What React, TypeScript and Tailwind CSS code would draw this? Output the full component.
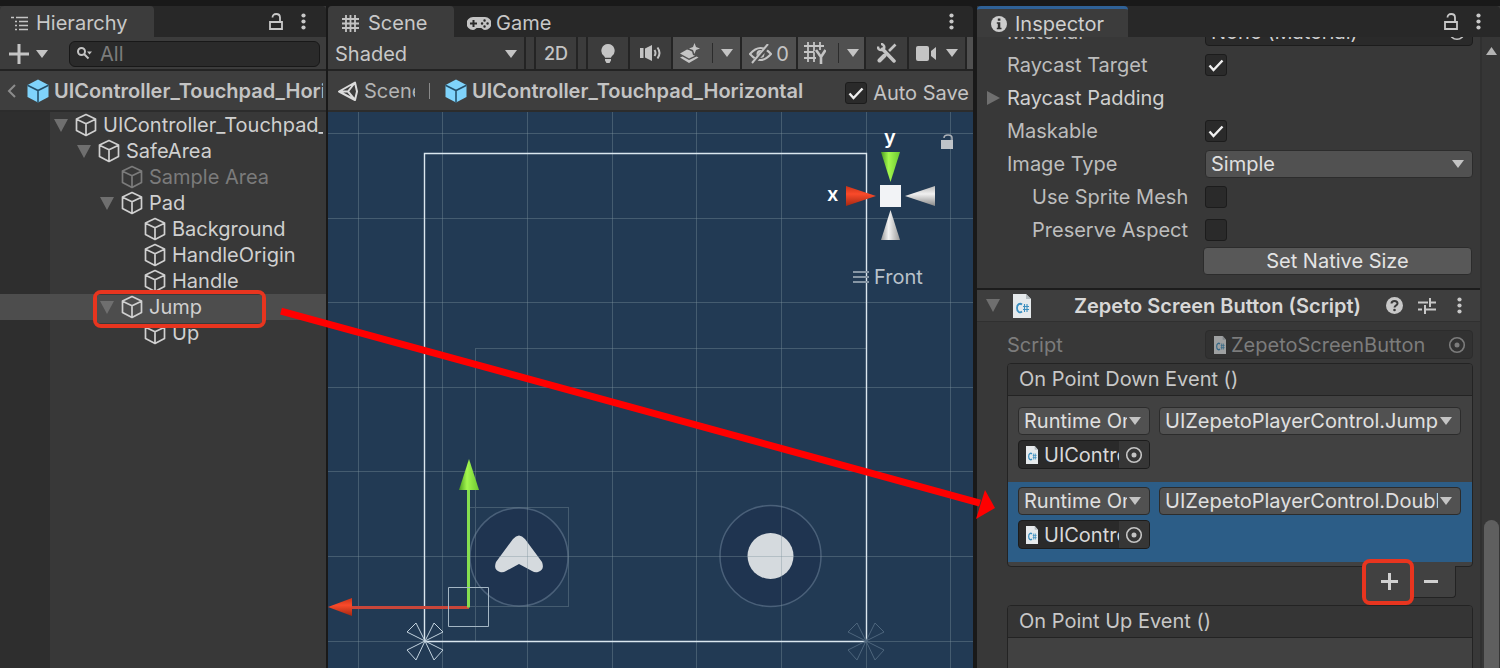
import { useState } from "react";
import type { ReactNode } from "react";

type TreeNode = {
  name: string;
  depth: number;
  open?: boolean;
  disabled?: boolean;
  selected?: boolean;
};

const nodes: TreeNode[] = [
  { name: "UIController_Touchpad_Horizontal", depth: 0, open: true },
  { name: "SafeArea", depth: 1, open: true },
  { name: "Sample Area", depth: 2, disabled: true },
  { name: "Pad", depth: 2, open: true },
  { name: "Background", depth: 3 },
  { name: "HandleOrigin", depth: 3 },
  { name: "Handle", depth: 3 },
  { name: "Jump", depth: 2, open: true, selected: true },
  { name: "Up", depth: 3 },
];

const indents = ["pl-[54px]", "pl-[77px]", "pl-[100px]", "pl-[123px]"];

function Down({ className = "text-[#c4c4c4]" }: { className?: string }) {
  return (
    <svg width="12" height="8" viewBox="0 0 12 8" className={`shrink-0 ${className}`}>
      <path d="M0 0h12L6 8z" fill="currentColor" />
    </svg>
  );
}

function Foldout() {
  return (
    <svg width="14" height="13" viewBox="0 0 14 13" className="shrink-0 text-[#6f6f6f]">
      <path d="M0 0h14L7 13z" fill="currentColor" />
    </svg>
  );
}

function Cube({ prefab = false }: { prefab?: boolean }) {
  return prefab ? (
    <svg width="22" height="24" viewBox="0 0 22 24" className="shrink-0">
      <path d="M11 .5 21.5 6v12L11 23.5.5 18V6z" fill="#7fd3fb" />
      <path d="M.5 6.200 11 11.500 21.500 6.200M11 11.500V23.500" stroke="#25506a" strokeWidth="1.600" fill="none" />
    </svg>
  ) : (
    <svg width="22" height="24" viewBox="0 0 22 24" fill="none" stroke="currentColor" strokeWidth="1.700" strokeLinejoin="round" className="shrink-0">
      <path d="M11 1.500 20.500 6v11.500L11 22.500 1.500 17.500V6zM1.500 6.200 11 10.800l9.500-4.600M11 10.800v11.700" />
    </svg>
  );
}

function Kebab() {
  return (
    <svg width="5" height="17" viewBox="0 0 5 17" fill="#c8c8c8">
      <circle cx="2.500" cy="2.500" r="2.100" />
      <circle cx="2.500" cy="8.500" r="2.100" />
      <circle cx="2.500" cy="14.500" r="2.100" />
    </svg>
  );
}

function Unlock() {
  return (
    <svg width="14" height="17" viewBox="0 0 14 17" fill="none" stroke="#c8c8c8" strokeWidth="1.800">
      <path d="M1 9h12v7H1zM3.500 4.500C3.500 2 5 1 7.200 1 9.800 1 11 2.300 11 4.500V9" />
    </svg>
  );
}

function Target({ className = "text-[#c4c4c4]" }: { className?: string }) {
  return (
    <svg width="18" height="18" viewBox="0 0 18 18" className={`shrink-0 ${className}`}>
      <circle cx="9" cy="9" r="7.300" fill="none" stroke="currentColor" strokeWidth="1.600" />
      <circle cx="9" cy="9" r="2.500" fill="currentColor" />
    </svg>
  );
}

function ScriptIcon({ large = false }: { large?: boolean }) {
  return (
    <svg width={large ? 18 : 12} height={large ? 24 : 18} viewBox="0 0 18 24" preserveAspectRatio="none" className="shrink-0">
      <path d="M0 0h13l5 5v19H0z" fill="#e6eaec" />
      <path d="M13 0v5h5z" fill="#b4bcc0" />
      <path d="M9 10.500C7 8.800 4 10 4 14s3 5.300 5 3.500" stroke="#3b8fc0" strokeWidth="1.800" fill="none" />
      <path d="M11.500 10v8M14 10v8M10 12.500h6M10 15.500h6" stroke="#3b8fc0" strokeWidth="1.100" fill="none" />
    </svg>
  );
}

function Tab({ children, className }: { children: ReactNode; className: string }) {
  return (
    <button type="button" className={`flex h-full items-center whitespace-nowrap ${className}`}>
      {children}
    </button>
  );
}

function Hierarchy() {
  return (
    <section className="flex w-[326px] shrink-0 flex-col overflow-hidden bg-[#383838]">
      <div className="flex h-[31px] items-center rounded-t bg-[#282828]">
        <Tab className="w-[154px] gap-2 rounded-t bg-[#3c3c3c] pl-[11px] pt-[3px]">
          <svg width="17" height="15" viewBox="0 0 17 15" stroke="#c4c4c4" strokeWidth="1.600" fill="none">
            <path d="M0 1.500h3M5 1.500h12M4 5.500h2M8 5.500h9M4 9.500h2M8 9.500h9M4 13.500h2M8 13.500h9" />
          </svg>
          Hierarchy
        </Tab>
        <div className="flex flex-1 items-center justify-end gap-[18px] pr-[20px]">
          <button type="button" aria-label="Lock"><Unlock /></button>
          <button type="button" aria-label="Hierarchy menu"><Kebab /></button>
        </div>
      </div>

      <div className="flex h-[34px] items-center border-b-2 border-[#232323] bg-[#3c3c3c] pl-[9px] pr-[6px] pt-px">
        <button type="button" aria-label="Create" className="flex w-[60px] shrink-0 items-center gap-[7px]">
          <svg width="20" height="20" viewBox="0 0 20 20" stroke="#c4c4c4" strokeWidth="3">
            <path d="M10 0v20M0 10h20" />
          </svg>
          <Down />
        </button>
        <label className="flex h-[26px] min-w-0 flex-1 items-center gap-2 rounded-md border border-[#181818] bg-[#2a2a2a] pl-[7px]">
          <svg width="15" height="14" viewBox="0 0 15 14" fill="none" stroke="#c4c4c4" strokeWidth="2" className="shrink-0">
            <circle cx="4.500" cy="4.500" r="3.500" />
            <path d="m7 7 4.500 4.500" />
            <path d="M10 4.500h5l-2.500 3z" fill="#c4c4c4" stroke="none" />
          </svg>
          <input aria-label="Search hierarchy" placeholder="All" className="min-w-0 flex-1 bg-transparent outline-none placeholder:text-[#7c7c7c]" />
        </label>
      </div>

      <div className="flex h-[41px] items-center overflow-hidden border-b-2 border-[#2c2c2c] bg-[#3e3e3e] pl-[7px] pr-[3px] pt-px">
        <button type="button" aria-label="Back" className="mr-[11px]">
          <svg width="9" height="14" viewBox="0 0 9 14" fill="none" stroke="#8c8c8c" strokeWidth="2">
            <path d="M8 1 2 7l6 6" />
          </svg>
        </button>
        <Cube prefab />
        <span className="ml-[5px] overflow-hidden whitespace-nowrap font-semibold text-[#c4c4c4]">UIController_Touchpad_Horizontal</span>
      </div>

      <div className="flex-1 bg-linear-to-r from-[#2e2e2e] from-[50px] to-[#383838] to-[50px]">
        <ul>
          {nodes.map((node) => (
            <li
              key={node.name}
              className={`relative flex h-[26px] items-center pr-[3px] ${indents[node.depth]} ${node.selected ? "z-10 bg-[#4d4d4d]" : ""} ${node.disabled ? "text-[#7b7b7b]" : "text-[#d0d0d0]"}`}
            >
              {node.selected && (
                <div className="absolute -top-[4px] left-[93px] flex h-[38px] w-[173px] flex-col overflow-hidden rounded-lg border-4 border-[#e8351f] bg-[#3a3a3a] py-px">
                  <div className="flex-1 bg-[#4d4d4d]" />
                </div>
              )}
              <div className="relative flex min-w-0 flex-1 items-center">
                <span className="flex w-[21px] shrink-0">{node.open && <Foldout />}</span>
                <Cube />
                <span className="ml-[6px] overflow-hidden whitespace-nowrap">{node.name}</span>
              </div>
            </li>
          ))}
        </ul>
      </div>
    </section>
  );
}

function Tool({ label, className, children }: { label: string; className: string; children: ReactNode }) {
  return (
    <button type="button" aria-label={label} className={`flex h-full shrink-0 items-center justify-center border-r-2 border-[#242424] text-[#c4c4c4] ${className}`}>
      {children}
    </button>
  );
}

function SceneToolbar() {
  return (
    <div className="flex h-[34px] items-center overflow-hidden border-b-2 border-[#232323] bg-[#3c3c3c]">
      <button type="button" className="flex h-full w-[198px] shrink-0 items-center justify-between border-r-2 border-[#242424] pl-[7px] pr-[7px] pt-[2px]">
        Shaded
        <Down />
      </button>
      <div className="h-full w-[10px] shrink-0 border-r-2 border-[#242424]" />
      <Tool label="2D" className="w-[42px] pt-[2px] text-lg font-medium">2D</Tool>
      <div className="h-full w-[10px] shrink-0 border-r-2 border-[#242424]" />
      <Tool label="Lighting" className="w-[42px]">
        <svg width="14" height="19" viewBox="0 0 14 19" fill="currentColor">
          <path d="M7 0a6.700 6.700 0 0 1 4 12c-.6.600-1 1.200-1 1.800H4c0-.6-.4-1.200-1-1.800A6.700 6.700 0 0 1 7 0zM4 15h6v1.500L8.500 19h-3L4 16.500z" />
        </svg>
      </Tool>
      <Tool label="Audio" className="w-[43px]">
        <svg width="22" height="16" viewBox="0 0 22 16" fill="currentColor">
          <path d="M0 3h3.500v10H0zM5 3.500 12 0v16l-7-3.500z" />
          <path d="M14.500 5q2 3 0 6M17.500 2.500q4 5.500 0 11" fill="none" stroke="currentColor" strokeWidth="2" />
        </svg>
      </Tool>
      <Tool label="Effects" className="w-[69px] bg-[#505050]">
        <svg width="20" height="20" viewBox="0 0 20 20" fill="currentColor">
          <path d="m14.500 0 1.500 4 4 1.500-4 1.500-1.500 4L13 7 9 5.500 13 4z" />
          <path d="M0 10.500 7 6.500l2.500.8 2.500 1.200 1 3.500 2 .8-6 2.700z" />
          <path d="m0 14.500 2.500-1L9 17l7.500-3.500 2 1L9 20z" />
        </svg>
        <span className="ml-[12px] mr-[8px] h-[20px] w-px bg-[#2c2c2c]" />
        <Down />
      </Tool>
      <Tool label="Hidden objects" className="w-[56px] gap-1 bg-[#505050] pt-px">
        <svg width="23" height="20" viewBox="0 0 23 20" fill="none" stroke="currentColor" strokeWidth="2">
          <path d="M1 10Q11.500-2 22 10 11.500 22 1 10z" />
          <circle cx="11.500" cy="10" r="4" fill="currentColor" stroke="none" />
          <path d="M20 1 4 19" stroke="#505050" strokeWidth="4" />
          <path d="M19 0 3 19" />
        </svg>
        0
      </Tool>
      <Tool label="Grid" className="w-[68px] bg-[#505050]">
        <svg width="22" height="22" viewBox="0 0 22 22" fill="none" stroke="currentColor" strokeWidth="1.800">
          <path d="M0 4h20M0 10h11M0 16h12M4 0v20M10 0v20M16 0v8" />
          <path d="m12 8 5 7 4.500-7M17 14.500V22" stroke="#505050" strokeWidth="5" />
          <path d="m12 8 5 7 4.500-7M17 14.500V22" strokeWidth="2.600" />
        </svg>
        <span className="ml-[12px] mr-[8px] h-[20px] w-px bg-[#2c2c2c]" />
        <Down />
      </Tool>
      <Tool label="Tools" className="w-[43px]">
        <svg width="20" height="20" viewBox="0 0 20 20" fill="none" stroke="currentColor">
          <path d="M5.500 6 17 18" strokeWidth="3.500" strokeLinecap="round" />
          <path d="M1 3.500Q1 7.500 5 7 8 6 7 3 6 1 4 1" strokeWidth="2.500" />
          <path d="M18.500 1.500 12 8" strokeWidth="2.600" />
          <path d="m7.500 12.500-5 5" strokeWidth="4" strokeLinecap="round" />
        </svg>
      </Tool>
      <Tool label="Camera" className="w-[58px] gap-[9px]">
        <svg width="21" height="15" viewBox="0 0 21 15" fill="currentColor">
          <rect width="13" height="15" rx="2" />
          <path d="m15 5 5-4v13l-5-4z" />
        </svg>
        <Down />
      </Tool>
      <Tool label="Gizmos" className="w-[42px] bg-[#505050]">
        <svg width="28" height="20" viewBox="0 0 28 20" fill="none" stroke="currentColor" strokeWidth="2">
          <circle cx="10" cy="10" r="8" />
        </svg>
      </Tool>
    </div>
  );
}

const gridX = [30, 114, 199, 284, 368, 453, 538, 622];
const gridY = [21, 106, 190, 275, 359, 444, 529];

function SceneCanvas() {
  return (
    <div className="relative min-h-[555px] flex-1 overflow-hidden bg-[#223a54] text-white">
      <svg width="100%" height="100%" className="absolute inset-0" fill="none">
        <defs>
          <linearGradient id="coneGreen"><stop stopColor="#4a9c20" /><stop offset=".4" stopColor="#a4f84e" /><stop offset="1" stopColor="#6cc832" /></linearGradient>
          <linearGradient id="coneRed" x2="0" y2="1"><stop stopColor="#c93318" /><stop offset=".4" stopColor="#fa4a2a" /><stop offset="1" stopColor="#a42812" /></linearGradient>
          <linearGradient id="coneV"><stop stopColor="#999" /><stop offset=".4" stopColor="#f4f4f4" /><stop offset="1" stopColor="#999" /></linearGradient>
          <linearGradient id="coneH" x2="0" y2="1"><stop stopColor="#bbb" /><stop offset=".4" stopColor="#f0f0f0" /><stop offset="1" stopColor="#888" /></linearGradient>
        </defs>

        <circle cx="191" cy="445" r="49" fill="#1f3450" stroke="#4a6079" strokeWidth="1.500" />
        <circle cx="442.500" cy="444" r="50.500" fill="#1f3450" stroke="#4a6079" strokeWidth="1.500" />
        <circle cx="442.500" cy="444" r="23" fill="#d5dade" />
        <path d="M185 427q6-7 12 0l17 23q3 8-4 10-3 1-6-1l-13-7-13 7q-3 2-6 1-7-2-4-10z" fill="#d5dade" />

        <g stroke="#7f929f" strokeOpacity=".38" shapeRendering="crispEdges">
          {gridX.map((x) => <line key={x} x1={x + 0.5} x2={x + 0.5} y1="0" y2="100%" />)}
          {gridY.map((y) => <line key={y} x1="0" x2="100%" y1={y + 0.5} y2={y + 0.5} />)}
          <path d="M147.500 529V236.500h390M141 395.500h99.500v99H141" />
        </g>

        <path d="M96.500 41.500h442v488h-442z" stroke="#dbe7ef" strokeWidth="1.400" />
        <path d="M97 529 88 511 79 520zM97 529l9-18 9 9zM97 529l-18 9 9 10zM97 529l18 9-9 10z" stroke="#c3d3df" />
        <path d="M538 529l-9-18-9 9zM538 529l9-18 9 9zM538 529l-18 9 9 10zM538 529l18 9-9 10z" stroke="#4d657c" />

        <path d="M23 495.500h118" stroke="#c9463a" strokeWidth="3" />
        <path d="M140.500 495.500V376" stroke="#86de50" strokeWidth="3" />
        <path d="M131 378h20l-10-31z" fill="url(#coneGreen)" />
        <path d="M24 486v18L0 495z" fill="url(#coneRed)" />
        <path d="M120.500 475.500h40v39h-40z" stroke="#a4b6c4" />

        <path d="M553 40h19l-9.500 30z" fill="url(#coneGreen)" />
        <path d="M518 74v20l30-10z" fill="url(#coneRed)" />
        <path d="M607 74v20l-30-10z" fill="url(#coneH)" />
        <path d="M553 128h19l-9.500-30z" fill="url(#coneV)" />
        <path d="M552 73h21v22h-21z" fill="#f2f3f6" />

        <path d="M613 28h12v9h-12z" fill="#bfc3c8" />
        <path d="M616 26q0-3 4-3t4 3v2" stroke="#aeb3b9" strokeWidth="1.500" />
        <path d="M525 160h16M525 165h16M525 170h16" stroke="#8796a5" strokeWidth="2" />
      </svg>
      <span className="absolute left-[556px] top-[13px] text-xl font-semibold leading-6">y</span>
      <span className="absolute left-[499px] top-[70px] text-xl font-semibold leading-6">x</span>
      <button type="button" className="absolute left-[546px] top-[153px] leading-6 text-[#b9c2cb]">Front</button>
    </div>
  );
}

function SceneView() {
  return (
    <section className="mr-[2px] flex min-w-0 flex-1 flex-col overflow-hidden">
      <div className="flex h-[31px] items-center rounded-t bg-[#282828]">
        <Tab className="w-[126px] gap-[9px] rounded-t bg-[#3c3c3c] pl-[14px] pt-[3px]">
          <svg width="17" height="17" viewBox="0 0 17 17" stroke="#c4c4c4" strokeWidth="1.800">
            <path d="M4 0v17M8.500 0v17M13 0v17M0 4h17M0 8.500h17M0 13h17" />
          </svg>
          Scene
        </Tab>
        <Tab className="gap-[5px] pl-[13px] pt-[3px]">
          <svg width="24" height="13" viewBox="0 0 24 13">
            <path d="M6 0h12a6 6 0 0 1 0 13c-2 0-3-2-4-2h-4c-1 0-2 2-4 2A6 6 0 0 1 6 0z" fill="#c4c4c4" />
            <path d="M6.500 3v7M3 6.500h7" stroke="#282828" strokeWidth="2" />
            <path d="M17.500 3.500h.1M17.500 9.500h.1M15 6.500h.1M20.500 6.500h.1" stroke="#282828" strokeWidth="2.400" strokeLinecap="round" />
          </svg>
          Game
        </Tab>
        <button type="button" aria-label="Scene menu" className="ml-auto mr-[19px]"><Kebab /></button>
      </div>

      <SceneToolbar />

      <div className="flex h-[41px] items-center border-b-2 border-[#2c2c2c] bg-[#3e3e3e] pl-[10px] pr-1 text-[#b4b4b4]">
        <svg width="20" height="20" viewBox="0 0 20 20" fill="none" stroke="#dcdcdc" strokeWidth="2" strokeLinejoin="round" className="shrink-0">
          <path d="M1 10.500 17 1.500l2 9-2 8.500zM1 10.500h9M10 10.500l7-9M10 10.500l7 8.500" />
        </svg>
        <button type="button" className="ml-[6px] w-[51px] shrink-0 overflow-hidden whitespace-nowrap text-left">Scenes</button>
        <span className="ml-[14px] mr-[15px] h-4 w-px shrink-0 bg-[#8a8a8a]" />
        <Cube prefab />
        <span className="ml-[5px] min-w-0 overflow-hidden whitespace-nowrap font-semibold text-[#c4c4c4]">UIController_Touchpad_Horizontal</span>
        <div className="ml-auto flex shrink-0 items-center gap-[6px] pt-[5px] text-[#c4c4c4]">
          <Check id="autosave" defaultChecked />
          <label htmlFor="autosave">Auto Save</label>
        </div>
      </div>

      <SceneCanvas />
    </section>
  );
}

function Check({ id, defaultChecked = false }: { id: string; defaultChecked?: boolean }) {
  return (
    <span className="grid size-[22px] shrink-0">
      <input id={id} type="checkbox" defaultChecked={defaultChecked} className="peer col-start-1 row-start-1 size-[22px] appearance-none rounded-[3px] border border-[#1c1c1c] bg-[#2a2a2a]" />
      <svg width="22" height="22" viewBox="0 0 22 22" fill="none" stroke="#efefef" strokeWidth="2.400" className="pointer-events-none invisible col-start-1 row-start-1 peer-checked:visible">
        <path d="m4.500 11.500 4 4.500L17.500 6.500" />
      </svg>
    </span>
  );
}

function Field({ label, htmlFor, nested, foldout, children }: { label: string; htmlFor?: string; nested?: boolean; foldout?: boolean; children?: ReactNode }) {
  return (
    <div className="flex h-[33px] items-center pl-[10px] pr-[7px]">
      <span className="w-[20px] shrink-0">
        {foldout && (
          <svg width="13" height="14" viewBox="0 0 13 14" fill="#6f6f6f"><path d="M0 0v14l13-7z" /></svg>
        )}
      </span>
      <label htmlFor={htmlFor} className={`w-[198px] shrink-0 whitespace-nowrap ${nested ? "pl-[25px]" : ""} ${foldout ? "text-[#d0d0d0]" : ""}`}>{label}</label>
      {children}
    </div>
  );
}

function Dropdown({ id, label, value, className }: { id: string; label: string; value: string; className: string }) {
  return (
    <span className={`grid items-center ${className}`}>
      <select id={id} aria-label={label} className="col-start-1 row-start-1 h-[28px] w-full min-w-0 appearance-none overflow-hidden rounded border border-[#2c2c2c] bg-[#515151] pl-[5px] pr-[22px] leading-6 text-[#e0e0e0]">
        <option>{value}</option>
      </select>
      <span className="pointer-events-none col-start-1 row-start-1 mr-[9px] justify-self-end"><Down /></span>
    </span>
  );
}

function Listener({ index, method, selected }: { index: number; method: string; selected?: boolean }) {
  return (
    <div className={`grid h-[80px] grid-cols-[132px_1fr] content-start gap-x-[9px] gap-y-[5px] pl-[10px] pr-[11px] pt-[5px] ${selected ? "bg-[#2c5d87]" : ""}`}>
      <Dropdown id={`mode-${index}`} label="Call state" value="Runtime Only" className="min-w-0" />
      <Dropdown id={`method-${index}`} label="Function" value={method} className="min-w-0" />
      <button type="button" className="flex h-[29px] items-center overflow-hidden rounded border border-[#1c1c1c] bg-[#2a2a2a] pl-[7px] text-[#d8d8d8]">
        <ScriptIcon />
        <span className="ml-[6px] w-[75px] shrink-0 overflow-hidden whitespace-nowrap text-left">UIController</span>
        <span className="grid h-full flex-1 place-items-center bg-[#363636]"><Target /></span>
      </button>
    </div>
  );
}

function Inspector() {
  const [listeners] = useState(["UIZepetoPlayerControl.Jump", "UIZepetoPlayerControl.DoubleJump"]);

  return (
    <section className="flex w-[523px] shrink-0 flex-col overflow-hidden bg-[#383838] text-[#bdbdbd]">
      <div className="flex h-[31px] shrink-0 items-center rounded-t bg-[#282828]">
        <Tab className="w-[151px] gap-2 rounded-t border-t-[3px] border-[#2f6196] bg-[#3c3c3c] pl-[14px] pt-px text-[#d0d0d0]">
          <svg width="16" height="16" viewBox="0 0 16 16">
            <circle cx="8" cy="8" r="8" fill="#cdcdcd" />
            <path d="M6.800 2.500h2.600v2.200H6.800zM5.800 6.200h3.500v5.500h1.200v1.500H5.800v-1.500h1V7.700h-1z" fill="#303030" />
          </svg>
          Inspector
        </Tab>
        <div className="ml-auto flex items-center gap-[18px] pr-[19px]">
          <button type="button" aria-label="Lock"><Unlock /></button>
          <button type="button" aria-label="Inspector menu"><Kebab /></button>
        </div>
      </div>

      <div className="flex min-h-0 flex-1">
        <div className="h-[631px] min-w-0 flex-1 overflow-hidden">
          {/* list is scrolled a little past the Material row */}
          <div className="-mt-[22px]">
            <Field label="Material">
              <button type="button" className="flex h-[28px] flex-1 items-center justify-between rounded border border-[#1c1c1c] bg-[#2a2a2a] pl-[5px] pr-[6px] text-[#d0d0d0]">
                None (Material)
                <Target />
              </button>
            </Field>
            <Field label="Raycast Target" htmlFor="raycast"><Check id="raycast" defaultChecked /></Field>
            <Field label="Raycast Padding" foldout />
            <Field label="Maskable" htmlFor="maskable"><Check id="maskable" defaultChecked /></Field>
            <Field label="Image Type" htmlFor="image-type">
              <Dropdown id="image-type" label="Image Type" value="Simple" className="flex-1" />
            </Field>
            <Field label="Use Sprite Mesh" htmlFor="sprite-mesh" nested><Check id="sprite-mesh" /></Field>
            <Field label="Preserve Aspect" htmlFor="aspect" nested><Check id="aspect" /></Field>
          </div>
          <div className="mt-px flex justify-end pr-2">
            <button type="button" className="h-[28px] w-[269px] rounded border border-[#2c2c2c] bg-[#585858] text-[#e4e4e4]">Set Native Size</button>
          </div>

          <div className="mt-[13px] flex h-[34px] items-center border-b border-t-2 border-b-[#303030] border-t-[#1c1c1c] bg-[#3e3e3e] pl-[9px] pr-[18px]">
            <Foldout />
            <span className="ml-[13px]"><ScriptIcon large /></span>
            <h2 className="ml-[43px] flex-1 whitespace-nowrap font-semibold text-[#d8d8d8]">Zepeto Screen Button (Script)</h2>
            <button type="button" aria-label="Help">
              <svg width="17" height="17" viewBox="0 0 17 17">
                <circle cx="8.500" cy="8.500" r="8.500" fill="#c8c8c8" />
                <path d="M5.500 6.500Q5.500 4 8.500 4t3 2.500c0 2-3 1.700-3 4" fill="none" stroke="#3a3a3a" strokeWidth="2" />
                <circle cx="8.500" cy="13" r="1.300" fill="#3a3a3a" />
              </svg>
            </button>
            <button type="button" aria-label="Presets" className="ml-[15px] mr-[21px]">
              <svg width="18" height="16" viewBox="0 0 18 16" stroke="#c8c8c8" strokeWidth="2" fill="none">
                <path d="M0 4.500h10M13 4.500h5M12 0v9M0 11.500h4M7 11.500h11M7 7v9" />
              </svg>
            </button>
            <button type="button" aria-label="Component menu"><Kebab /></button>
          </div>

          <div className="mt-[6px] text-[#7c7c7c]">
            <Field label="Script">
              <button type="button" disabled className="flex h-[29px] flex-1 items-center rounded border border-[#2c2c2c] bg-[#323232] pl-[8px] pr-[6px]">
                <span className="flex opacity-60"><ScriptIcon /></span>
                <span className="ml-[5px] flex-1 text-left">ZepetoScreenButton</span>
                <Target className="text-[#7c7c7c]" />
              </button>
            </Field>
          </div>

          <div className="ml-[30px] mr-[7px] mt-[2px]">
            <div className="overflow-hidden rounded border border-[#232323] bg-[#414141]">
              <h3 className="h-[32px] border-b border-[#232323] bg-[#353535] pl-[11px] leading-[31px] text-[#c8c8c8]">On Point Down Event ()</h3>
              <div className="pb-[4px] pt-[6px]">
                {listeners.map((method, i) => (
                  <Listener key={method} index={i} method={method} selected={i === 1} />
                ))}
              </div>
            </div>
            <div className="mr-[17px] flex justify-end">
              <div className="-mt-px flex h-[32px] w-[89px] items-center rounded-b border border-t-0 border-[#232323] bg-[#414141]">
                <button type="button" aria-label="Add listener" className="relative z-10 -ml-[6px] grid h-[46px] w-[52px] shrink-0 place-items-center rounded-lg border-4 border-[#e8351f] bg-[#414141] pl-[3px]">
                  <svg width="17" height="17" viewBox="0 0 17 17" stroke="#d0d0d0" strokeWidth="3">
                    <path d="M8.500 0v17M0 8.500h17" />
                  </svg>
                </button>
                <button type="button" aria-label="Remove listener" className="ml-[10px] grid h-full w-[14px] place-items-center">
                  <svg width="14" height="3" viewBox="0 0 14 3"><path d="M0 0h14v3H0z" fill="#d0d0d0" /></svg>
                </button>
              </div>
            </div>
            <div className="mt-[7px] h-[80px] overflow-hidden rounded-t border border-[#232323] bg-[#414141]">
              <h3 className="h-[32px] border-b border-[#232323] bg-[#353535] pl-[11px] leading-[31px] text-[#c8c8c8]">On Point Up Event ()</h3>
            </div>
          </div>
        </div>

        <div className="flex w-[20px] shrink-0 flex-col items-center border-l-2 border-[#303030] bg-[#363636] pt-[10px]">
          <svg width="11" height="8" viewBox="0 0 11 8" fill="#b4b4b4"><path d="M0 8h11L5.500 0z" /></svg>
          <div className="mt-auto h-[148px] w-[15px] rounded-t-full bg-[#5f5f5f]" />
        </div>
      </div>
    </section>
  );
}

export default function App() {
  return (
    <main className="relative flex min-h-screen gap-[2px] overflow-hidden border-t-[6px] border-[#191919] bg-[#191919] font-[Inter,sans-serif] text-xl leading-6 text-[#c8c8c8]">
      <Hierarchy />
      <SceneView />
      <Inspector />
      {/* callout from the Jump object to the new listener */}
      <svg className="pointer-events-none absolute inset-0 z-20" width="1000" height="662" viewBox="0 0 1000 662" fill="none">
        <path d="M281 305 980 497" stroke="#ff0000" strokeWidth="7" />
        <path d="m985 484 10 18-19 11z" fill="#ff0000" />
      </svg>
    </main>
  );
}
